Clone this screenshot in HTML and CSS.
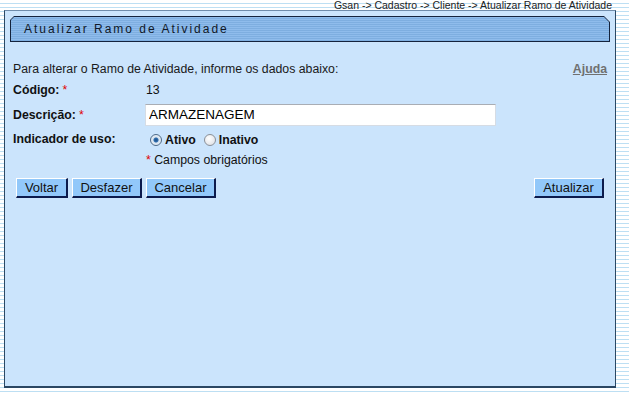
FILE: index.html
```html
<!DOCTYPE html>
<html lang="pt">
<head>
  <meta charset="UTF-8" />
  <title>Atualizar Ramo de Atividade</title>
  <link rel="stylesheet" href="styles.css">
</head>
<body>
  <div class="crumbs">Gsan -&gt; Cadastro -&gt; Cliente -&gt; Atualizar Ramo de Atividade</div>
  <div class="panel">
    <div class="titleBar">
      <div class="titleInner">Atualizar Ramo de Atividade</div>
    </div>

    <div class="content">
      <div class="intro">
        <span>Para alterar o Ramo de Atividade, informe os dados abaixo:</span>
        <a href="#" class="help">Ajuda</a>
      </div>

      <div class="form">
        <div class="label">Código:<span class="req">*</span></div>
        <div class="value">13</div>

        <div class="label">Descrição:<span class="req">*</span></div>
        <div class="value"><input type="text" class="field" value="ARMAZENAGEM"></div>

        <div class="label">Indicador de uso:</div>
        <div class="value radios">
          <label><input type="radio" name="uso" checked> Ativo</label>
          <label><input type="radio" name="uso"> Inativo</label>
        </div>

        <div></div>
        <div class="value note"><span class="req">*</span> Campos obrigatórios</div>
      </div>

      <div class="actions">
        <div class="group">
          <button class="btn small">Voltar</button>
          <button class="btn">Desfazer</button>
          <button class="btn">Cancelar</button>
        </div>
        <button class="btn">Atualizar</button>
      </div>
    </div>
  </div>
</body>
</html>
```

FILE: styles.css
```css
html, body { height: 100%; }
body {
  margin: 0;
  font-family: "Liberation Sans", Arial, sans-serif;
  font-size: 12.3px;
  color: #000;
  background: repeating-linear-gradient(to bottom, #fff 0, #fff 3px, #bddff3 3px, #bddff3 4px);
}

.crumbs {
  height: 10px;
  line-height: 11px;
  font-size: 10.5px;
  color: #222;
  text-align: right;
  padding-right: 17px;
  overflow: visible;
}

.panel {
  margin-left: 4px;
  width: 610px;
  height: 375px;
  background: #cbe4fc;
  border: 1px solid #2b4763;
  border-top-color: #6f8cab;
  border-bottom-width: 2px;
}

/* barra do titulo com cantos cortados */
.titleBar {
  margin: 5px 0 0 5px;
  width: 600px;
  height: 26px;
  background: #14233d;
  padding: 1px;
  box-sizing: border-box;
  clip-path: polygon(4px 0, 594px 0, 600px 6px, 600px 26px, 0 26px, 0 4px);
}
.titleInner {
  height: 100%;
  clip-path: polygon(3px 0, 593px 0, 598px 5px, 598px 24px, 0 24px, 0 3px);
  background: repeating-linear-gradient(to bottom, #8fbcec 0, #8fbcec 1px, #7eaee0 1px, #7eaee0 2px);
  font-size: 12px;
  letter-spacing: 2px;
  line-height: 24px;
  padding-left: 13px;
  color: #101828;
}

.content { padding: 0 8px 0 8px; }

.intro {
  margin-top: 20px;
  line-height: 14px;
  display: flex;
  justify-content: space-between;
  color: #1a1a1a;
}
.help {
  color: #707070;
  font-weight: bold;
  text-decoration: underline;
}

.form {
  margin-top: 7px;
  display: grid;
  grid-template-columns: 133px 1fr;
  grid-template-rows: 14px 21px 14px 14px;
  row-gap: 7px;
  align-items: center;
  line-height: 14px;
}

.label { font-weight: bold; color: #111; }
.req { color: #e00000; font-weight: normal; margin-left: 3px; }
.note .req { margin-left: 0; }
.value { color: #111; }

.field {
  box-sizing: border-box;
  width: 351px;
  height: 22px;
  border: 1px solid #d6dce4;
  border-top-color: #a9adb4;
  background: #fff;
  font-family: "Liberation Sans", Arial, sans-serif;
  font-size: 13.5px;
  padding: 2px 3px;
  margin-left: -1px;
  outline: none;
}

.radios { display: flex; gap: 8px; padding-left: 4px; font-weight: bold; margin-top: 2px; }
.radios label { display: flex; align-items: center; gap: 3px; }
.radios input {
  appearance: none;
  margin: 0;
  width: 12px;
  height: 12px;
  border-radius: 50%;
  border: 1px solid #8a9098;
  background: radial-gradient(circle at 40% 35%, #fff 0, #e4e6ea 70%);
  box-sizing: border-box;
}
.radios input:checked {
  border-color: #4d6a88;
  background: radial-gradient(circle, #1d4f86 0, #2d6cad 2px, #d8e4f0 3px, #f4f6f8 100%);
}

.note { font-weight: normal; }

.actions {
  margin-top: 11px;
  display: flex;
  justify-content: space-between;
  padding: 0 3px 0 3px;
}
.group { display: flex; gap: 4px; }
.btn {
  box-sizing: border-box;
  width: 70px;
  height: 20px;
  padding: 0;
  background: #92c8fa;
  border: 1px solid;
  border-color: #fff #0c1b4d #0c1b4d #fff;
  border-width: 1px 2px 2px 1px;
  font-family: "Liberation Sans", Arial, sans-serif;
  font-size: 13px;
  color: #111;
}
.btn.small { width: 52px; }
```
